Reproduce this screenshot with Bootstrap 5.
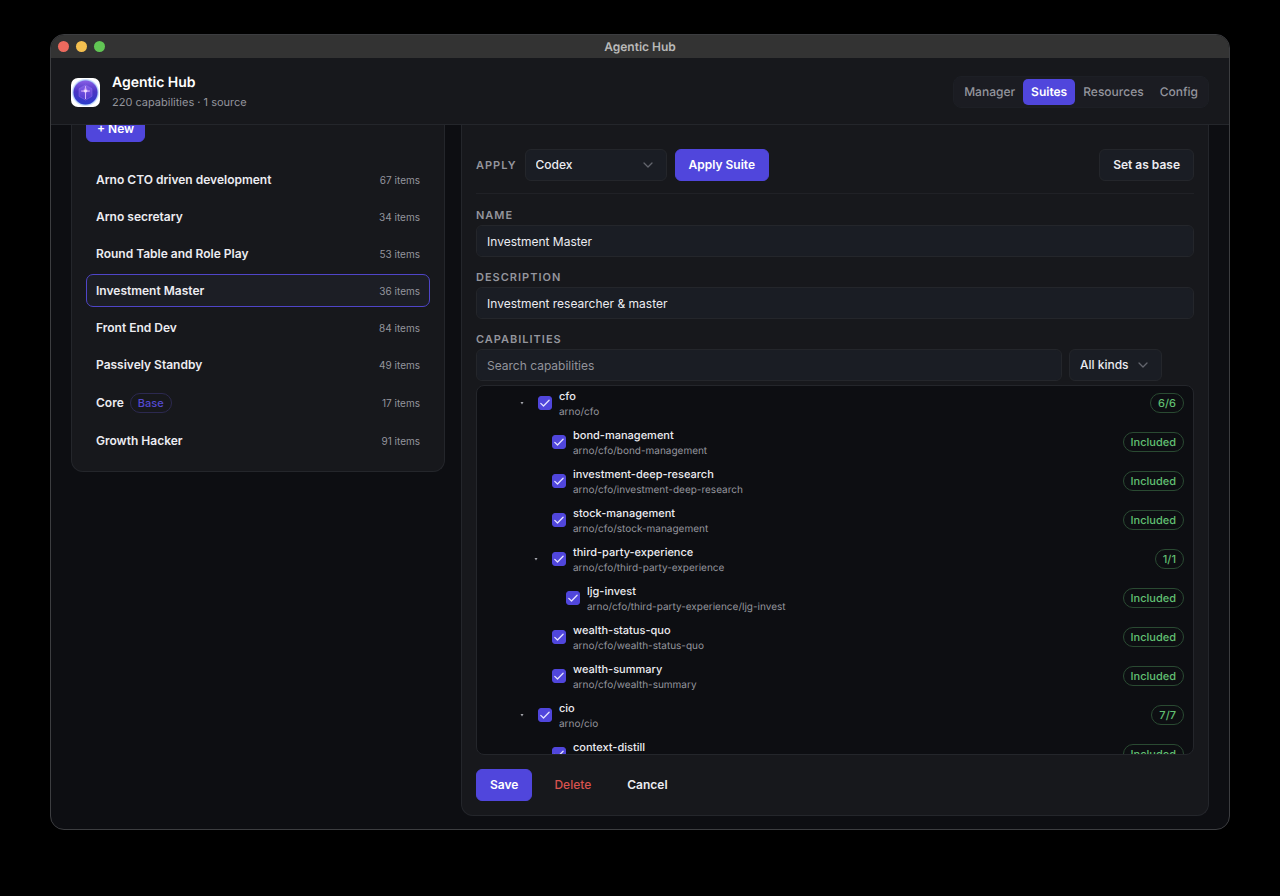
<!DOCTYPE html>
<html lang="en" data-bs-theme="dark">
<head>
<meta charset="utf-8">
<meta name="viewport" content="width=device-width, initial-scale=1">
<title>Agentic Hub</title>
<link href="https://cdn.jsdelivr.net/npm/bootstrap@5.3.0/dist/css/bootstrap.min.css" rel="stylesheet">
<style>
  :root {
    --surface: #17181c;
    --base: #0d0e12;
    --field: #1a1d24;
    --line: #24262b;
    --accent: #5046dc;
    --ink: #ececf1;
    --dim: #94959d;
    --ok: #62c073;
  }
  body {
    height: 100vh;
    margin: 0;
    padding: 34px 50px 66px;
    background: #000;
    color: var(--ink);
    font: 400 12px/20px Inter, "Liberation Sans", sans-serif;
    text-rendering: geometricPrecision;
  }
  .window {
    background: var(--base);
    border: 1px solid #3c3d40;
    border-radius: 14px;
    overflow: hidden;
  }
  .titlebar {
    height: 23px;
    flex: none;
    background: #333333;
    color: #b9b9b9;
    font-weight: 600;
  }
  .lights { left: 7px; gap: 7px; }
  .lights span { width: 11px; height: 11px; border-radius: 50%; }
  .topbar {
    height: 67px;
    flex: none;
    padding: 2px 20px 0;
    background: var(--surface);
    border-bottom: 1px solid var(--line);
  }
  .brand-name { font-size: 14px; font-weight: 600; line-height: 20px; margin: 0; }
  .brand-sub { font-size: 11px; line-height: 18px; color: var(--dim); }
  .tabs { background: #1b1c22; border: 1px solid #1d1f25; border-radius: 8px; padding: 2px; }
  .tabs .nav-link { padding: 3px 8px; border-radius: 5px; color: var(--dim); font-weight: 500; }
  .tabs .nav-link.active { background: var(--accent); color: #fff; font-weight: 600; }

  .workspace {
    flex: 1;
    min-height: 0;
    display: grid;
    grid-template-columns: 1fr 2fr;
    grid-template-rows: minmax(0, 1fr);
    gap: 16px;
    padding: 0 20px 13px;
    overflow: hidden;
  }
  .panel {
    background: var(--surface);
    border: 1px solid var(--line);
    border-top: 0;
    border-radius: 0 0 12px 12px;
    padding: 0 14px 14px;
    min-width: 0;
  }
  .editor { padding-top: 24px; }

  .btn { font-size: 12px; font-weight: 600; line-height: 20px; padding: 5px 13px; border-radius: 6px; white-space: nowrap; }
  .btn-accent, .btn-accent:hover { background: var(--accent); border-color: var(--accent); color: #fff; }
  .btn-field, .btn-field:hover { background: var(--field); border-color: var(--line); color: var(--ink); }
  .btn-plain { color: var(--ink); }
  .btn-danger-text { color: #d9534f; font-weight: 500; }
  .btn-new { padding: 4px 10px 2px; margin-top: -11px; }

  .suites { margin-top: 21px; gap: 4px; }
  .suite {
    display: flex;
    align-items: center;
    gap: 6px;
    height: 33px;
    padding: 0 9px;
    border: 1px solid transparent;
    border-radius: 7px;
    background: none;
    color: var(--ink);
    font-size: 12px;
    font-weight: 600;
    line-height: 20px;
    text-align: left;
  }
  .suite.active { background: #1c1e25; border-color: #4f45c8; }
  .count { margin-left: auto; color: var(--dim); font-size: 10px; font-weight: 400; }
  .pill {
    border: 1px solid #2c2950;
    border-radius: 10px;
    padding: 0 7px;
    font-size: 11px;
    font-weight: 500;
    line-height: 18px;
  }
  .pill-base { color: #5449cf; }
  .suite:has(.pill) { height: 35px; }
  .pill-ok { color: var(--ok); border-color: #2a4a32; margin-left: auto; }

  .caption { color: var(--dim); font-size: 11px; font-weight: 600; line-height: 20px; letter-spacing: 1px; text-transform: uppercase; margin: 0; }
  .apply-row { padding-bottom: 12px; margin-bottom: 11px; border-bottom: 1px solid #202126; }
  .form-control, .form-select {
    height: 32px;
    padding: 5px 10px;
    font-size: 12px;
    line-height: 20px;
    color: var(--ink);
    background-color: var(--field);
    border: 1px solid var(--line);
    border-radius: 6px;
  }
  .form-control::placeholder { color: #92939b; }
  .field { margin-bottom: 10px; }
  .form-select {
    font-weight: 500;
    background-image: url("data:image/svg+xml,%3Csvg xmlns='http://www.w3.org/2000/svg' viewBox='0 0 12 12'%3E%3Cpath d='M2 4l4 4 4-4' fill='none' stroke='%2363656d' stroke-width='1.3' stroke-linecap='round' stroke-linejoin='round'/%3E%3C/svg%3E");
    background-size: 12px;
    background-position: right 12px center;
  }
  .select-target { width: 142px; }
  .select-kind { width: 93px; }
  .search-row { gap: 7px; margin-right: 32px; margin-bottom: 4px; }

  .tree {
    flex: 1;
    min-height: 0;
    overflow: hidden;
    background: var(--base);
    border: 1px solid var(--line);
    border-radius: 8px;
    margin-bottom: 14px;
  }
  .tree-list { margin: -3px 0 0; }
  .node { height: 39px; padding-right: 9px; }
  .depth-3 { padding-left: 37px; }
  .depth-4 { padding-left: 51px; }
  .depth-5 { padding-left: 65px; }
  .twisty { width: 16px; margin-right: 8px; border: 0; padding: 0; background: none; color: #a5a6ad; line-height: 0; }
  .node .form-check-input {
    width: 14px;
    height: 14px;
    margin: 0 7px 0 0;
    flex: none;
    border-radius: 3px;
  }
  .node .form-check-input:checked {
    background-color: var(--accent);
    border-color: var(--accent);
    background-image: url("data:image/svg+xml,%3Csvg xmlns='http://www.w3.org/2000/svg' viewBox='0 0 12 12'%3E%3Cpath d='M1.8 6.4l2.7 2.6 5.6-5.8' fill='none' stroke='%23e4e2ff' stroke-width='1.3' stroke-linecap='round' stroke-linejoin='round'/%3E%3C/svg%3E");
  }
  .node-name { display: block; font-size: 11px; font-weight: 500; line-height: 18px; }
  .node-path { display: block; font-size: 10px; line-height: 14px; color: var(--dim); }
</style>
</head>
<body>
<div class="window d-flex flex-column h-100">
  <div class="titlebar position-relative d-flex align-items-center justify-content-center">
    <div class="lights position-absolute d-flex">
      <span style="background:#ec6a5e"></span><span style="background:#f4bf4f"></span><span style="background:#61c554"></span>
    </div>
    Agentic Hub
  </div>

  <header class="topbar d-flex align-items-center justify-content-between">
    <div class="d-flex align-items-center">
      <svg class="me-2" width="29" height="29" viewBox="0 0 29 29" aria-hidden="true">
        <defs>
          <radialGradient id="halo"><stop offset=".7" stop-color="#5d8df0"/><stop offset=".88" stop-color="#a9c6f8"/><stop offset="1" stop-color="#fff"/></radialGradient>
          <linearGradient id="orb" x1="0" y1="0" x2="0" y2="1"><stop offset="0" stop-color="#8a5fe6"/><stop offset=".45" stop-color="#4a35c4"/><stop offset="1" stop-color="#2c3ccb"/></linearGradient>
          <linearGradient id="gem" x1="0" y1="0" x2="0" y2="1"><stop offset="0" stop-color="#8560e6"/><stop offset="1" stop-color="#5238d2"/></linearGradient>
        </defs>
        <rect width="29" height="29" rx="7" fill="#fff"/>
        <circle cx="14.500" cy="14.500" r="14" fill="url(#halo)"/>
        <circle cx="14.500" cy="14.500" r="12" fill="url(#orb)"/>
        <path d="M14.500 7l6.500 3.700v7.600L14.500 22 8 18.300v-7.600z" fill="url(#gem)" stroke="#8f72ea" stroke-width=".5"/>
        <path d="M14.500 8.500v12M10.500 13h8" fill="none" stroke="#d6b6fa" stroke-width="1.100" stroke-linecap="round"/>
        <path d="M14.500 9l3.500 5h-7z" fill="#c79df5" opacity=".7"/>
        <circle cx="14.500" cy="13" r="1.500" fill="#f2e1ff"/>
      </svg>
      <div class="ms-1">
        <h1 class="brand-name">Agentic Hub</h1>
        <div class="brand-sub">220 capabilities · 1 source</div>
      </div>
    </div>
    <nav class="tabs nav" aria-label="Sections">
      <a class="nav-link" href="#manager">Manager</a>
      <a class="nav-link active" href="#suites" aria-current="page">Suites</a>
      <a class="nav-link" href="#resources">Resources</a>
      <a class="nav-link" href="#config">Config</a>
    </nav>
  </header>

  <main class="workspace">
    <section class="panel align-self-start" aria-label="Suites">
      <button type="button" class="btn btn-accent btn-new d-block">+ New</button>
      <div class="suites d-flex flex-column">
        <button type="button" class="suite">Arno CTO driven development<span class="count">67 items</span></button>
        <button type="button" class="suite">Arno secretary<span class="count">34 items</span></button>
        <button type="button" class="suite">Round Table and Role Play<span class="count">53 items</span></button>
        <button type="button" class="suite active">Investment Master<span class="count">36 items</span></button>
        <button type="button" class="suite">Front End Dev<span class="count">84 items</span></button>
        <button type="button" class="suite">Passively Standby<span class="count">49 items</span></button>
        <button type="button" class="suite">Core<span class="pill pill-base">Base</span><span class="count">17 items</span></button>
        <button type="button" class="suite">Growth Hacker<span class="count">91 items</span></button>
      </div>
    </section>

    <form class="panel editor d-flex flex-column" aria-label="Suite editor">
      <div class="apply-row d-flex align-items-center">
        <label class="caption me-2" for="target">Apply</label>
        <select class="form-select select-target me-2" id="target"><option>Codex</option></select>
        <button type="button" class="btn btn-accent">Apply Suite</button>
        <button type="button" class="btn btn-field ms-auto">Set as base</button>
      </div>

      <label class="caption" for="suite-name">Name</label>
      <input class="form-control field" id="suite-name" type="text" value="Investment Master">
      <label class="caption" for="suite-desc">Description</label>
      <input class="form-control field" id="suite-desc" type="text" value="Investment researcher &amp; master">
      <label class="caption" for="search">Capabilities</label>
      <div class="search-row d-flex">
        <input class="form-control" id="search" type="search" placeholder="Search capabilities">
        <select class="form-select select-kind flex-shrink-0" aria-label="Kind"><option>All kinds</option></select>
      </div>

      <div class="tree">
        <ul class="tree-list list-unstyled">
          <li class="node depth-3 d-flex align-items-center"><button type="button" class="twisty" aria-label="Toggle cfo"><svg width="4" height="4" viewBox="0 0 4 4"><path d="M.5 1h3L2 3.500z" fill="currentColor"/></svg></button><input class="form-check-input" type="checkbox" id="n1" checked><label for="n1"><span class="node-name">cfo</span><span class="node-path">arno/cfo</span></label><span class="pill pill-ok">6/6</span></li>
          <li class="node depth-4 d-flex align-items-center"><span class="twisty"></span><input class="form-check-input" type="checkbox" id="n2" checked><label for="n2"><span class="node-name">bond-management</span><span class="node-path">arno/cfo/bond-management</span></label><span class="pill pill-ok">Included</span></li>
          <li class="node depth-4 d-flex align-items-center"><span class="twisty"></span><input class="form-check-input" type="checkbox" id="n3" checked><label for="n3"><span class="node-name">investment-deep-research</span><span class="node-path">arno/cfo/investment-deep-research</span></label><span class="pill pill-ok">Included</span></li>
          <li class="node depth-4 d-flex align-items-center"><span class="twisty"></span><input class="form-check-input" type="checkbox" id="n4" checked><label for="n4"><span class="node-name">stock-management</span><span class="node-path">arno/cfo/stock-management</span></label><span class="pill pill-ok">Included</span></li>
          <li class="node depth-4 d-flex align-items-center"><button type="button" class="twisty" aria-label="Toggle third-party-experience"><svg width="4" height="4" viewBox="0 0 4 4"><path d="M.5 1h3L2 3.500z" fill="currentColor"/></svg></button><input class="form-check-input" type="checkbox" id="n5" checked><label for="n5"><span class="node-name">third-party-experience</span><span class="node-path">arno/cfo/third-party-experience</span></label><span class="pill pill-ok">1/1</span></li>
          <li class="node depth-5 d-flex align-items-center"><span class="twisty"></span><input class="form-check-input" type="checkbox" id="n6" checked><label for="n6"><span class="node-name">ljg-invest</span><span class="node-path">arno/cfo/third-party-experience/ljg-invest</span></label><span class="pill pill-ok">Included</span></li>
          <li class="node depth-4 d-flex align-items-center"><span class="twisty"></span><input class="form-check-input" type="checkbox" id="n7" checked><label for="n7"><span class="node-name">wealth-status-quo</span><span class="node-path">arno/cfo/wealth-status-quo</span></label><span class="pill pill-ok">Included</span></li>
          <li class="node depth-4 d-flex align-items-center"><span class="twisty"></span><input class="form-check-input" type="checkbox" id="n8" checked><label for="n8"><span class="node-name">wealth-summary</span><span class="node-path">arno/cfo/wealth-summary</span></label><span class="pill pill-ok">Included</span></li>
          <li class="node depth-3 d-flex align-items-center"><button type="button" class="twisty" aria-label="Toggle cio"><svg width="4" height="4" viewBox="0 0 4 4"><path d="M.5 1h3L2 3.500z" fill="currentColor"/></svg></button><input class="form-check-input" type="checkbox" id="n9" checked><label for="n9"><span class="node-name">cio</span><span class="node-path">arno/cio</span></label><span class="pill pill-ok">7/7</span></li>
          <li class="node depth-4 d-flex align-items-center"><span class="twisty"></span><input class="form-check-input" type="checkbox" id="n10" checked><label for="n10"><span class="node-name">context-distill</span><span class="node-path">&nbsp;</span></label><span class="pill pill-ok">Included</span></li>
        </ul>
      </div>

      <div class="d-flex gap-2">
        <button type="button" class="btn btn-accent">Save</button>
        <button type="button" class="btn btn-danger-text">Delete</button>
        <button type="button" class="btn btn-plain">Cancel</button>
      </div>
    </form>
  </main>
</div>
<script src="https://cdn.jsdelivr.net/npm/bootstrap@5.3.0/dist/js/bootstrap.bundle.min.js"></script>
</body>
</html>
